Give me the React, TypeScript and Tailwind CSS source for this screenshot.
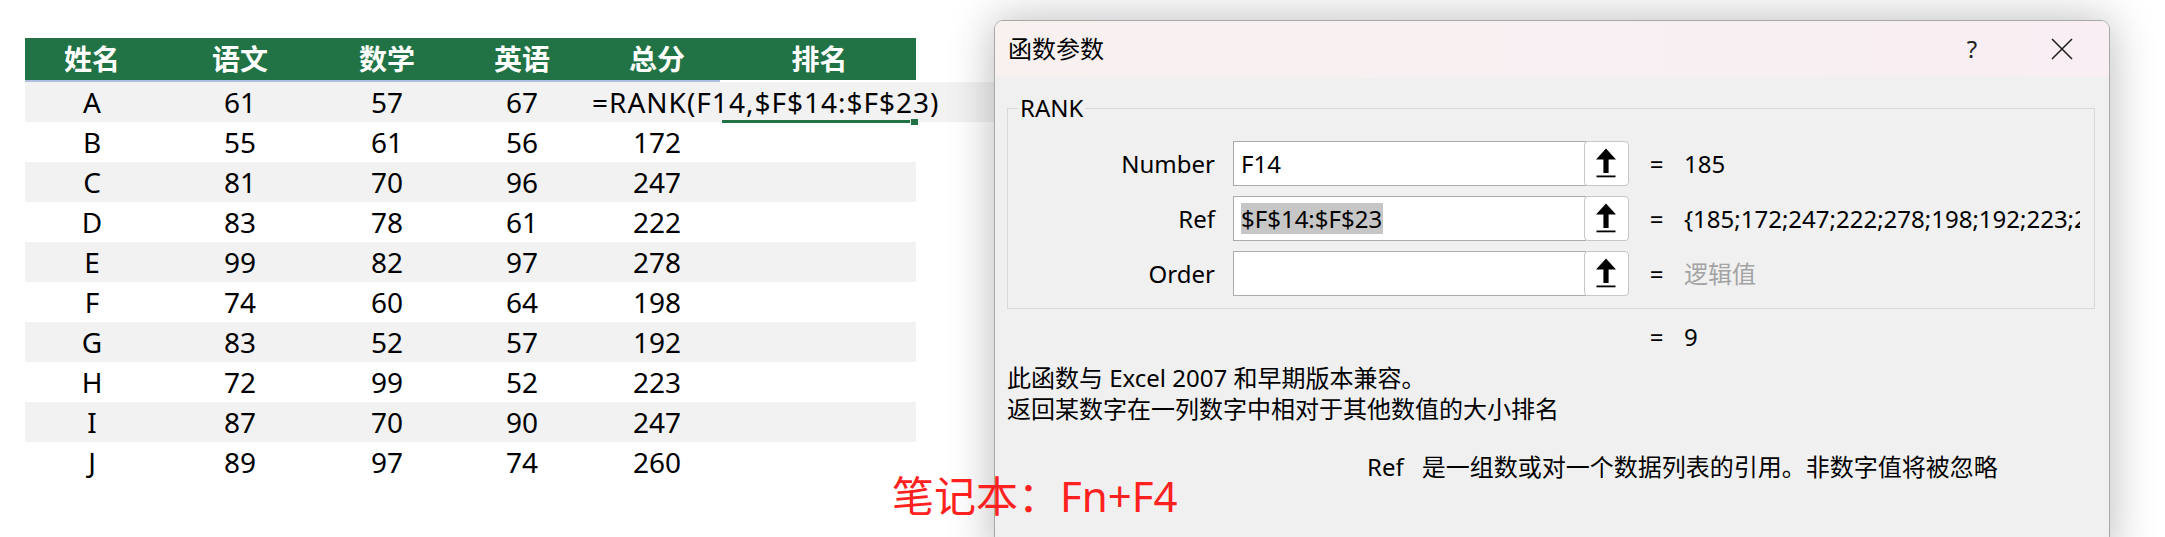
import React from "react";

const colW = ["w-[134px]", "w-[162px]", "w-[132px]", "w-[138px]", "w-[132px]", "w-[193px]"];
const headers = ["姓名", "语文", "数学", "英语", "总分", "排名"];
const rows: string[][] = [
  ["A", "61", "57", "67", ""],
  ["B", "55", "61", "56", "172"],
  ["C", "81", "70", "96", "247"],
  ["D", "83", "78", "61", "222"],
  ["E", "99", "82", "97", "278"],
  ["F", "74", "60", "64", "198"],
  ["G", "83", "52", "57", "192"],
  ["H", "72", "99", "52", "223"],
  ["I", "87", "70", "90", "247"],
  ["J", "89", "97", "74", "260"],
];

function UpButton() {
  return (
    <div className="w-[45px] h-[45px] -ml-[2px] shrink-0 rounded-[4px] border border-[#c6c6c6] bg-white">
      <svg className="block" width="43" height="43" viewBox="0 0 43 43">
        <path d="M21 6.5 L31 17.5 L23.6 17.5 L23.6 31 L18.4 31 L18.4 17.5 L11 17.5 Z" fill="#000" />
        <rect x="11.5" y="33.5" width="19" height="1.8" fill="#000" />
      </svg>
    </div>
  );
}

function ArgRow({ label, value, result, highlight, muted }: { label: string; value: string; result: string; highlight?: boolean; muted?: boolean }) {
  return (
    <div className="flex items-center h-[45px]">
      <div className="w-[197px] text-right">{label}</div>
      <div className="ml-[18px] w-[353px] h-[45px] border border-[#ababab] bg-white flex items-center pl-[7px]">
        {value && (
          <span className={highlight ? "bg-[#c6c6c6] leading-[31px] pr-[1px]" : "leading-[31px]"}>{value}</span>
        )}
      </div>
      <UpButton />
      <div className="w-[55px] text-center">=</div>
      <div className={muted ? "w-[396px] overflow-hidden whitespace-nowrap text-[#a3a3a3]" : "w-[396px] overflow-hidden whitespace-nowrap"}>{result}</div>
    </div>
  );
}

export default function App() {
  return (
    <div className="relative w-[2165px] h-[537px] overflow-hidden bg-white flex font-['Noto_Sans','Noto_Sans_CJK_SC',sans-serif] text-black">
      {/* Spreadsheet */}
      <div className="w-[994px] shrink-0 pt-[38px]">
        <div className="ml-[25px] w-[891px] h-[42px] bg-[#217346] flex text-white font-bold text-[28px]">
          {headers.map((h, i) => (
            <div key={h} className={`${colW[i]} flex items-center justify-center`}>{h}</div>
          ))}
        </div>
        <div className="ml-[25px] w-[695px] h-[2px] bg-[#aebfe0]" />
        {rows.map((r, ri) => {
          const first = ri === 0;
          const gray = ri % 2 === 0;
          return (
            <div
              key={ri}
              className={
                first
                  ? "relative ml-[25px] w-[969px] h-[40px] bg-[#f2f2f2] flex items-center text-[28px]"
                  : gray
                  ? "ml-[25px] w-[891px] h-[40px] bg-[#f2f2f2] flex items-center text-[28px]"
                  : "ml-[25px] w-[891px] h-[40px] flex items-center text-[28px]"
              }
            >
              {r.slice(0, 4).map((c, ci) => (
                <div key={ci} className={`${colW[ci]} text-center`}>{c}</div>
              ))}
              {first ? (
                <>
                  <div className="pl-[1px] whitespace-nowrap tracking-[1px]">=RANK(F14,$F$14:$F$23)</div>
                  <div className="absolute left-[697px] top-[38px] w-[188px] h-[3px] bg-[#217346]" />
                  <div className="absolute left-[886px] top-[37px] w-[7px] h-[6px] bg-[#217346]" />
                </>
              ) : (
                <div className="w-[132px] text-center">{r[4]}</div>
              )}
            </div>
          );
        })}
      </div>

      {/* Dialog */}
      <div className="relative z-10 mt-[20px] w-[1116px] h-[540px] shrink-0 rounded-t-[9px] border border-[#a8a8a8] bg-[#f0f0f0] shadow-[0_0_45px_rgba(0,0,0,0.28)] overflow-hidden text-[24px]">
        <div className="h-[56px] flex items-center bg-linear-to-r from-[#f8f1f0] to-[#f8eef3] pl-[13px]">
          <span className="flex-1">函数参数</span>
          <span className="w-[86px] text-center text-[#222]">?</span>
          <span className="w-[94px] flex justify-center">
            <svg width="22" height="22" viewBox="0 0 22 22">
              <path d="M1 1 L21 21 M21 1 L1 21" stroke="#222" strokeWidth="1.6" fill="none" />
            </svg>
          </span>
        </div>
        <div className="px-[12px]">
          <fieldset className="mt-[16px] w-[1088px] border border-[#d9d9d9] px-[10px] pt-[18px] pb-[12px]">
            <legend className="px-[2px] leading-[30px]">RANK</legend>
            <div className="flex flex-col gap-[10px]">
              <ArgRow label="Number" value="F14" result="185" />
              <ArgRow label="Ref" value="$F$14:$F$23" result="{185;172;247;222;278;198;192;223;247;260}" highlight />
              <ArgRow label="Order" value="" result="逻辑值" muted />
            </div>
          </fieldset>
          <div className="mt-[13px] flex items-center leading-[30px] pl-[622px]">
            <div className="w-[55px] text-center">=</div>
            <div>9</div>
          </div>
          <div className="mt-[10px] leading-[31px]">
            <div>此函数与 Excel 2007 和早期版本兼容。</div>
            <div>返回某数字在一列数字中相对于其他数值的大小排名</div>
          </div>
          <div className="mt-[27px] leading-[31px] pl-[360px] flex">
            <span>Ref</span>
            <span className="ml-[18px]">是一组数或对一个数据列表的引用。非数字值将被忽略</span>
          </div>
        </div>
      </div>

      {/* Red annotation */}
      <div className="absolute z-20 left-[892px] top-[471px] text-[42px] leading-[50px] text-[#ff2020] whitespace-nowrap">
        笔记本：Fn+F4
      </div>
    </div>
  );
}
